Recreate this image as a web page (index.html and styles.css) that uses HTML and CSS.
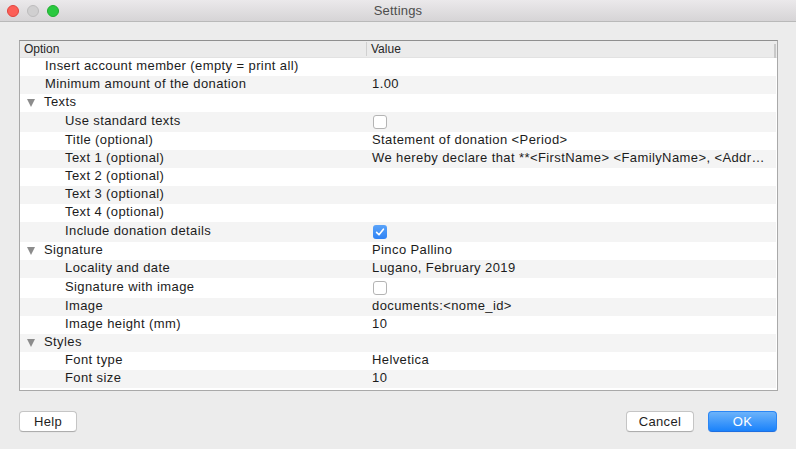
FILE: index.html
```html
<!DOCTYPE html>
<html>
<head>
<meta charset="utf-8">
<link rel="stylesheet" href="styles.css">
</head>
<body>
<div class="window">
  <div class="titlebar">
    <div class="lights">
      <span class="light red"></span>
      <span class="light gray"></span>
      <span class="light green"></span>
    </div>
    <div class="title">Settings</div>
  </div>
  <div class="content">
    <div class="table">
      <div class="header">
        <div class="hcell">Option</div>
        <div class="hcell hval">Value</div>
        <div class="hend"></div>
      </div>
      <div class="row odd"><div class="opt l0">Insert account member (empty = print all)</div><div class="val"></div></div>
      <div class="row even"><div class="opt l0">Minimum amount of the donation</div><div class="val">1.00</div></div>
      <div class="row odd"><div class="opt l0"><span class="tri"></span>Texts</div><div class="val"></div></div>
      <div class="row even tall"><div class="opt l1">Use standard texts</div><div class="val"><span class="cb"></span></div></div>
      <div class="row odd"><div class="opt l1">Title (optional)</div><div class="val">Statement of donation &lt;Period&gt;</div></div>
      <div class="row even"><div class="opt l1">Text 1 (optional)</div><div class="val">We hereby declare that **&lt;FirstName&gt; &lt;FamilyName&gt;, &lt;Address&gt;** has donated</div></div>
      <div class="row odd"><div class="opt l1">Text 2 (optional)</div><div class="val"></div></div>
      <div class="row even"><div class="opt l1">Text 3 (optional)</div><div class="val"></div></div>
      <div class="row odd"><div class="opt l1">Text 4 (optional)</div><div class="val"></div></div>
      <div class="row even tall"><div class="opt l1">Include donation details</div><div class="val"><span class="cb checked"><svg viewBox="0 0 14 14" width="14" height="14"><path d="M3.6 7.4 L6 9.8 L10.4 4.2" fill="none" stroke="#fff" stroke-width="1.6" stroke-linecap="round" stroke-linejoin="round"/></svg></span></div></div>
      <div class="row odd"><div class="opt l0"><span class="tri"></span>Signature</div><div class="val">Pinco Pallino</div></div>
      <div class="row even"><div class="opt l1">Locality and date</div><div class="val">Lugano, February 2019</div></div>
      <div class="row odd tall"><div class="opt l1">Signature with image</div><div class="val"><span class="cb"></span></div></div>
      <div class="row even"><div class="opt l1">Image</div><div class="val">documents:&lt;nome_id&gt;</div></div>
      <div class="row odd"><div class="opt l1">Image height (mm)</div><div class="val">10</div></div>
      <div class="row even"><div class="opt l0"><span class="tri"></span>Styles</div><div class="val"></div></div>
      <div class="row odd"><div class="opt l1">Font type</div><div class="val">Helvetica</div></div>
      <div class="row even"><div class="opt l1">Font size</div><div class="val">10</div></div>
    </div>
    <div class="buttons">
      <button class="btn">Help</button>
      <div class="spacer"></div>
      <button class="btn cancel">Cancel</button>
      <button class="btn primary">OK</button>
    </div>
  </div>
</div>
</body>
</html>
```
FILE: styles.css
```css
html, body {
  margin: 0;
  padding: 0;
}
body {
  width: 796px;
  height: 449px;
  background: #ececec;
  font-family: "Liberation Sans", Arial, sans-serif;
  font-size: 13px;
  color: #1c1c1c;
  overflow: hidden;
}
.window {
  display: flex;
  flex-direction: column;
  height: 449px;
}
.titlebar {
  height: 21px;
  border-bottom: 1px solid #b9b9b9;
  background: linear-gradient(#ebe9eb, #d6d4d6);
  display: flex;
  align-items: center;
  position: relative;
}
.lights {
  display: flex;
  gap: 8px;
  padding-left: 7px;
}
.light {
  width: 12px;
  height: 12px;
  border-radius: 50%;
  box-sizing: border-box;
}
.light.red { background: #fc5f57; border: 0.5px solid #e0443e; }
.light.gray { background: #d0cfd0; border: 0.5px solid #bdbcbd; }
.light.green { background: #2ac940; border: 0.5px solid #1fad2f; }
.title {
  position: absolute;
  left: 0;
  right: 0;
  text-align: center;
  font-size: 13px;
  letter-spacing: 0.2px;
  color: #4d4d4d;
  top: 3px;
}
.content {
  padding: 18px 19px 0 19px;
}
.table {
  width: 759px;
  height: 351px;
  box-sizing: border-box;
  border: 1px solid #a9a9a9;
  border-top-color: #8f8f8f;
  background: #ffffff;
  overflow: hidden;
}
.header {
  display: flex;
  height: 17px;
  background: #ebebeb;
  border-bottom: 1px solid #e2e2e2;
  box-sizing: border-box;
  font-size: 12px;
  line-height: 16px;
  position: relative;
}
.hcell {
  width: 346px;
  padding-left: 4px;
  box-sizing: border-box;
  color: #262626;
}
.hval {
  flex: 1;
  border-left: 1px solid #d0d0d0;
  padding-left: 4px;
  margin-top: 1px;
  height: 14px;
  line-height: 14px;
}
.hend {
  position: absolute;
  right: 1px;
  top: 3px;
  width: 2px;
  height: 14px;
  background: #c8c8c8;
}
.row {
  display: flex;
  height: 18px;
  line-height: 16px;
  margin-right: 1px;
  letter-spacing: 0.4px;
}
.row.tall {
  height: 20px;
  line-height: 18px;
}
.row.odd { background: #ffffff; }
.row.even { background: #f4f4f4; }
.opt {
  width: 346px;
  box-sizing: border-box;
  white-space: nowrap;
  display: flex;
  align-items: flex-start;
}
.opt.l0 { padding-left: 25px; }
.opt.l1 { padding-left: 45px; }
.tri {
  width: 0;
  height: 0;
  border-left: 4.5px solid transparent;
  border-right: 4.5px solid transparent;
  border-top: 8px solid #8c8c8c;
  margin-left: -18px;
  margin-right: 9px;
  margin-top: 5px;
}
.val {
  flex: 1;
  min-width: 0;
  padding-left: 6px;
  padding-right: 6px;
  white-space: nowrap;
  overflow: hidden;
  text-overflow: ellipsis;
}
.cb {
  display: inline-block;
  vertical-align: middle;
  width: 14px;
  height: 14px;
  box-sizing: border-box;
  border: 1px solid #b4b4b4;
  border-radius: 3px;
  background: #fff;
  margin-left: 1px;
  margin-top: 0px;
}
.cb.checked {
  border: none;
  background: linear-gradient(#5aa3f9, #2f83f5);
}
.cb svg { display: block; }
.buttons {
  display: flex;
  align-items: center;
  gap: 14px;
  margin-top: 20px;
}
.spacer { flex: 1; }
.btn {
  font-family: "Liberation Sans", Arial, sans-serif;
  font-size: 13px;
  letter-spacing: 0.3px;
  height: 21px;
  line-height: 19px;
  padding: 0;
  background: #ffffff;
  border: 1px solid #c5c5c5;
  border-bottom-color: #adadad;
  border-radius: 4px;
  color: #1e1e1e;
  width: 58px;
  box-shadow: 0 0.5px 0 rgba(0,0,0,0.05);
}
.btn.cancel { width: 68px; }
.btn.primary {
  width: 69px;
  background: linear-gradient(#6cb3fa, #1a82fb);
  border-color: #2a86f5;
  border-bottom-color: #1f6fe0;
  color: #ffffff;
}
```
